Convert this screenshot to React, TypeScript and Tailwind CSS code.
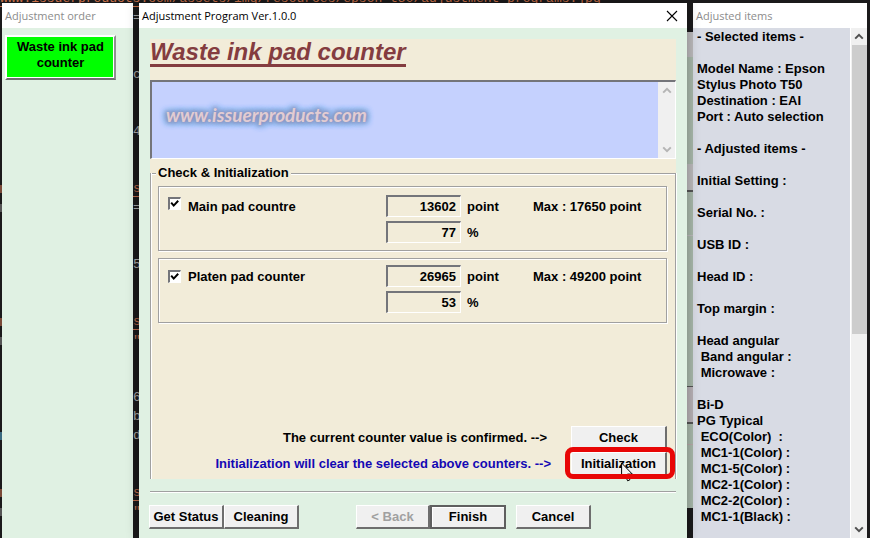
import type { ReactNode } from "react";
import { clsx } from "clsx";

const BODY = "font-['Liberation_Sans',Arial,sans-serif] text-[13px] leading-4 font-bold";
const TITLE = "font-['Open_Sans','Noto_Sans',sans-serif] text-[11px] leading-4 font-normal";
const RAISED = "border-t border-l border-b-2 border-r-2 border-t-white border-l-white border-b-[#6e6e6e] border-r-[#6e6e6e] bg-[#f0f0f0]";
const SUNKEN = "border-t-2 border-l-2 border-b border-r border-t-[#74757a] border-l-[#74757a] border-b-white border-r-white";

type CodeLine = { lead?: string; tail?: string; color?: string };

const codeLines: CodeLine[] = [
  { tail: "=" },
  {},
  {},
  { tail: "c" },
  {},
  {},
  { tail: "4" },
  {},
  {},
  { lead: "bg-[#7a4a38]", tail: "s", color: "text-[#b8694a] underline" },
  { lead: "bg-[#555]", tail: "=" },
  {},
  {},
  { tail: "5" },
  {},
  {},
  { lead: "bg-[#7a4a38]", tail: "s", color: "text-[#b8694a] underline" },
  { lead: "bg-[#555]", tail: '"', color: "text-[#b8694a]" },
  {},
  {},
  { tail: "6" },
  { tail: "b" },
  { lead: "bg-[#3a6a80]", tail: "d" },
  {},
  {},
  { lead: "bg-[#7a4a38]", tail: "s", color: "text-[#b8694a] underline" },
  { lead: "bg-[#555]", tail: '"', color: "text-[#b8694a]" },
];

function CodeBackdrop() {
  return (
    <div
      aria-hidden="true"
      className="absolute inset-x-0 -top-[11px] overflow-hidden font-['Liberation_Mono',monospace] text-[13px] leading-[19px] font-normal whitespace-pre text-[#a5a5a5] underline-offset-4"
    >
      <div className="text-[#c8704a] underline">
        www.issuerproducts.com/assets/img/resources/epson-t50/adjustment-programs.jpg
      </div>
      {codeLines.map((line, i) => (
        <div key={i} className="flex h-[19px] items-center gap-[131px]">
          <span className={clsx("h-2 w-0.5", line.lead)} />
          {line.tail && <span className={line.color}>{line.tail}</span>}
        </div>
      ))}
    </div>
  );
}

function Chevron({ down, muted }: { down?: boolean; muted?: boolean }) {
  return (
    <svg
      viewBox="0 0 10 7"
      className={clsx("h-[7px] w-[10px]", down && "rotate-180", muted ? "text-[#b5b5b5]" : "text-[#505050]")}
      fill="none"
      stroke="currentColor"
      strokeWidth="2"
      aria-hidden="true"
    >
      <path d="M1.2 5.6 5 1.8 8.8 5.6" />
    </svg>
  );
}

function PushButton({ children, className, disabled }: { children: ReactNode; className?: string; disabled?: boolean }) {
  return (
    <button
      type="button"
      disabled={disabled}
      className={clsx("h-6 shrink-0 whitespace-nowrap text-center", RAISED, disabled && "text-[#a0a0a0]", className)}
    >
      {children}
    </button>
  );
}

type CounterProps = {
  id: string;
  label: string;
  points: string;
  percent: string;
  max: string;
  className: string;
  boxAlign: string;
};

function CounterRow({ id, label, points, percent, max, className, boxAlign }: CounterProps) {
  const field = clsx("h-[22px] w-[75px] bg-transparent pr-1 text-right", SUNKEN);
  return (
    <div className={clsx("h-[65px] border border-[#a0a0a0] px-[9px] shadow-[1px_1px_0_#fff,inset_1px_1px_0_#fff]", className)}>
      <div className="grid grid-cols-[20px_198px_75px_1fr] items-start gap-y-0.5">
        <div className={clsx("flex h-[22px] py-0.5", boxAlign)}>
          <span className="grid">
            <input
              id={id}
              type="checkbox"
              defaultChecked
              className={clsx("peer col-start-1 row-start-1 size-[13px] appearance-none bg-white", SUNKEN)}
            />
            <svg
              viewBox="0 0 13 13"
              className="pointer-events-none invisible col-start-1 row-start-1 size-[13px] peer-checked:visible"
              fill="none"
              stroke="#000"
              strokeWidth="2"
              aria-hidden="true"
            >
              <path d="M3.2 5.6 5.7 8.6 10.2 3.8" />
            </svg>
          </span>
        </div>
        <label htmlFor={id} className="leading-6">{label}</label>
        <input id={id + "-points"} aria-label={label + " points"} readOnly defaultValue={points} className={field} />
        <div className="grid grid-cols-[66px_1fr] pl-1.5 leading-6">
          <label htmlFor={id + "-points"}>point</label>
          <span className="whitespace-nowrap">{max}</span>
        </div>
        <input id={id + "-percent"} aria-label={label + " percent"} readOnly defaultValue={percent} className={clsx("col-start-3", field)} />
        <label htmlFor={id + "-percent"} className="pl-1.5 leading-6">%</label>
      </div>
    </div>
  );
}

const edgeBands = [
  "h-[29px] bg-[#1b1a1b]",
  "h-[25px] bg-[#bcbabc]",
  "h-[107px] bg-[#a8b8aa]",
  "h-[28px] border-b-2 border-[#555] bg-[#bcbabc]",
  "h-[44px] border-b border-[#bcbabc] bg-[#a8b8aa]",
  "h-[151px] border-b border-[#555] bg-[#a8b8aa]",
  "h-[37px] border-b-2 border-[#555] bg-[#b8b2b6]",
  "h-[21px] border-b border-[#b8a8a8] bg-[#a8b8aa]",
  "h-[63px] bg-[#a8b8aa]",
  "flex-1 bg-[#1b1a1b]",
];

const report = `- Selected items -

Model Name : Epson
Stylus Photo T50
Destination : EAI
Port : Auto selection

- Adjusted items -

Initial Setting :

Serial No. :

USB ID :

Head ID :

Top margin :

Head angular
 Band angular :
 Microwave :

Bi-D
PG Typical
 ECO(Color)  :
 MC1-1(Color) :
 MC1-5(Color) :
 MC2-1(Color) :
 MC2-2(Color) :
 MC1-1(Black) :`;

function OrderWindow() {
  return (
    <section className="flex w-[131px] shrink-0 flex-col bg-[#e0f1e3]">
      <header className={clsx("flex h-[25px] items-center bg-white px-[3px] text-[#8c8c8c]", TITLE)}>Adjustment order</header>
      <div className="px-[3px] pt-[7px]">
        <button
          type="button"
          className="h-[45px] w-[111px] border-2 border-white border-r-[#909090] border-b-[#6e6e6e] bg-[#00ff00] pb-1.5 shadow-[inset_-1px_-1px_0_#fff]"
        >
          Waste ink pad
          <br />
          counter
        </button>
      </div>
    </section>
  );
}

function ProgramDialog() {
  return (
    <main className="relative z-10 flex min-w-0 flex-1 flex-col bg-[#e0f1e3] shadow-[0_0_12px_rgba(0,0,0,0.3)]">
      <header className={clsx("flex h-[25px] items-center justify-between bg-white pr-[9px] pl-[3px]", TITLE)}>
        <span>Adjustment Program Ver.1.0.0</span>
        <button type="button" aria-label="Close">
          <svg viewBox="0 0 12 12" className="size-3" stroke="#000" strokeWidth="1.1" aria-hidden="true">
            <path d="M1 1 11 11M11 1 1 11" />
          </svg>
        </button>
      </header>

      <div className="flex flex-col px-[11px] pt-[11px]">
        <div className="flex h-[440px] flex-col bg-[#f2ecd9]">
          <div className="h-[41px]">
            <h1 className="inline-block border-b-[3px] border-[#843c40] text-[24px] leading-[25px] font-bold whitespace-nowrap text-[#843c40] italic">
              Waste ink pad counter
            </h1>
          </div>

          <div className={clsx("relative flex h-[79px] bg-[#c5d1fe]", SUNKEN)}>
            <textarea aria-label="Message" readOnly className="min-w-0 flex-1 resize-none bg-transparent outline-none" />
            <div className="flex w-[17px] flex-col items-center justify-between bg-[#f0f0f0] py-[5px]">
              <Chevron muted />
              <Chevron down muted />
            </div>
            <span className="pointer-events-none absolute top-[21px] left-3.5 font-['Lato',sans-serif] text-[19px] leading-6 text-[#e2ccd2] italic [text-shadow:0_0_3px_#8d93bd,0_0_4px_#8d93bd,0_0_5px_#8d93bd,0_0_7px_#8a9cce,0_0_8px_#86b4ea,3px_3px_5px_#84bcf0,-3px_3px_5px_#84bcf0,3px_-3px_5px_#84bcf0,-3px_-3px_5px_#84bcf0]">
              www.issuerproducts.com
            </span>
          </div>

          <fieldset className="mt-1.5 flex min-h-0 flex-1 flex-col">
            <legend className="flex w-full items-center gap-0.5">
              <span className="h-px w-1.5 bg-[#a0a0a0] shadow-[0_1px_0_#fff]" />
              Check &amp; Initialization
              <span className="h-px flex-1 bg-[#a0a0a0] shadow-[0_1px_0_#fff]" />
            </legend>
            <div className="-mt-2 flex h-[306px] flex-col border-x border-[#a0a0a0] pr-2 pl-[7px] shadow-[inset_1px_0_0_#fff,1px_0_0_#fff]">
              <CounterRow
                id="main-pad"
                label="Main pad countre"
                points="13602"
                percent="77"
                max="Max : 17650 point"
                className="mt-[13px] pt-2"
                boxAlign="items-start"
              />
              <CounterRow
                id="platen-pad"
                label="Platen pad counter"
                points="26965"
                percent="53"
                max="Max : 49200 point"
                className="mt-[7px] pt-1.5"
                boxAlign="items-center"
              />
              <div className="mt-auto grid grid-cols-[1fr_96px] items-center gap-y-0.5 pb-[3px]">
                <p className="pr-6 text-right">The current counter value is confirmed. --&gt;</p>
                <PushButton>Check</PushButton>
                <p className="pr-5 text-right text-[#1408b4]">Initialization will clear the selected above counters. --&gt;</p>
                <div className="relative grid">
                  <PushButton>Initialization</PushButton>
                  <svg
                    viewBox="0 0 12 20"
                    className="absolute top-[10px] left-[50px] h-5 w-3"
                    fill="#f4f4f4"
                    stroke="#000"
                    strokeWidth="1"
                    aria-hidden="true"
                  >
                    <path d="M.6 1v15.2l3.5-3.3 2.5 5.9 2.3-1-2.5-5.7h4.9z" />
                  </svg>
                  <div className="pointer-events-none absolute -top-[5px] -right-2 -bottom-[3px] -left-1.5 rounded-lg border-[5px] border-[#e80606]" />
                </div>
              </div>
            </div>
          </fieldset>
        </div>

        <hr className="mt-3 h-0.5 border-t border-b border-t-[#a0a0a0] border-b-white" />

        <div className="-ml-px flex pt-3">
          <PushButton className="w-[75px]">Get Status</PushButton>
          <PushButton className="w-[75px]">Cleaning</PushButton>
          <div className="ml-auto flex pr-[85px]">
            <PushButton className="w-[74px]" disabled>&lt; Back</PushButton>
            <button type="button" className="mr-[10px] h-6 w-[76px] border-2 border-[#5f5f5f] bg-[#f0f0f0] shadow-[inset_1px_1px_0_#fff]">
              Finish
            </button>
            <PushButton className="w-[75px]">Cancel</PushButton>
          </div>
        </div>
      </div>
    </main>
  );
}

function ReportWindow() {
  return (
    <section className="flex w-[174px] shrink-0 flex-col bg-[#d8dbe4]">
      <header className={clsx("flex h-[25px] items-center bg-white px-[3px] text-[#8c8c8c]", TITLE)}>Adjusted items</header>
      <div className="flex min-h-0 flex-1">
        <div className="flex-1 overflow-hidden pt-px pl-1 whitespace-pre-wrap">{report}</div>
        <div className="flex w-[17px] flex-col items-center border-l border-white bg-[#f0f0f0]">
          <div className="flex h-[17px] items-center">
            <Chevron />
          </div>
          <div className="h-[289px] w-[15px] bg-[#cdcdcd]" />
          <div className="mt-auto flex h-[17px] items-center">
            <Chevron down />
          </div>
        </div>
      </div>
    </section>
  );
}

export default function App() {
  return (
    <div className={clsx("relative flex h-screen overflow-hidden bg-[#1b1a1b] pt-[3px] pr-[3px] pl-0.5 text-black", BODY)}>
      <CodeBackdrop />
      <div className="relative flex min-w-0 flex-1">
        <OrderWindow />
        <div className="w-1.5 shrink-0" />
        <ProgramDialog />
        <div aria-hidden="true" className="flex w-1.5 shrink-0 flex-col">
          {edgeBands.map((band, i) => (
            <div key={i} className={band} />
          ))}
        </div>
        <ReportWindow />
      </div>
    </div>
  );
}
